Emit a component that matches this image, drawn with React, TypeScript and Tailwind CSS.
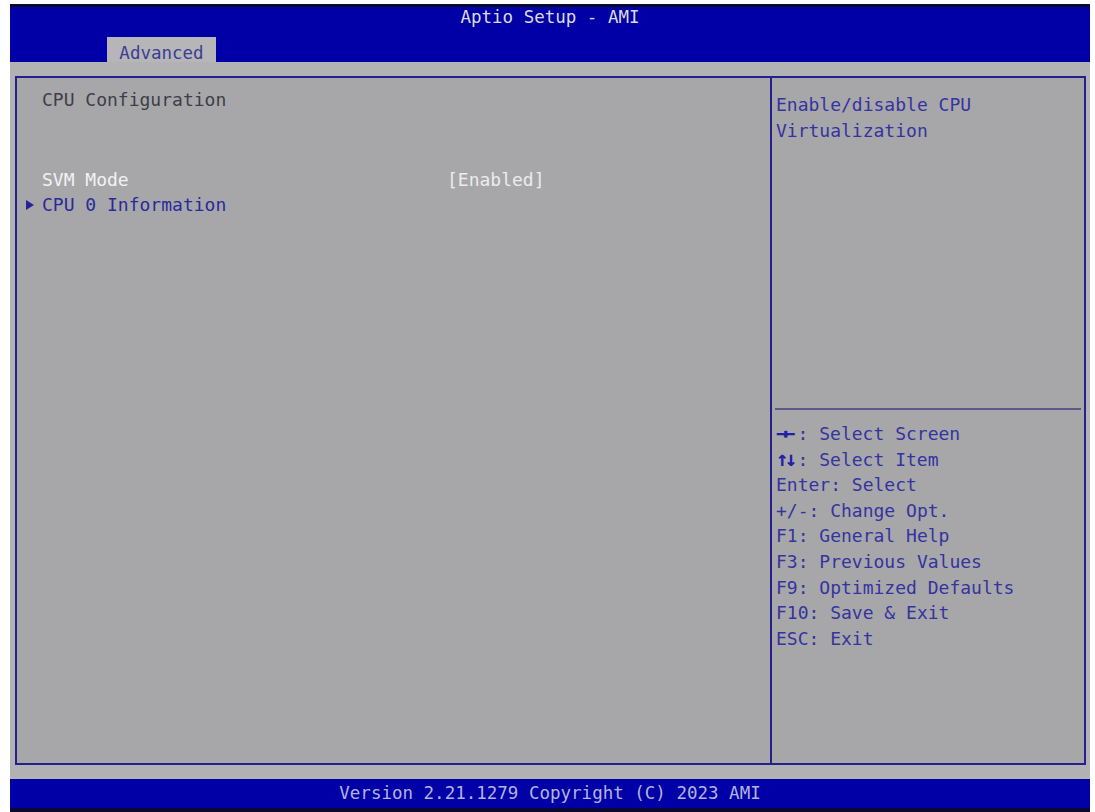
import React from "react";

const mono = { fontFamily: '"DejaVu Sans Mono", "Liberation Mono", monospace' };

function Arrow() {
  return (
    <svg width="8" height="10" viewBox="0 0 8 10" className="absolute left-[5px] top-[8px]">
      <polygon points="0,0 8,5 0,10" fill="#24249a" />
    </svg>
  );
}

function Help({ k, text }: { k: React.ReactNode; text: string }) {
  return (
    <div className="h-[25.6px] leading-[25.6px] whitespace-pre">
      {k}
      {text}
    </div>
  );
}

export default function App() {
  return (
    <div
      className="w-[1095px] h-[812px] bg-white pl-[10px] pr-[5px] pt-[4px] flex flex-col text-[18px] overflow-hidden"
      style={mono}
    >
      <div className="flex flex-col w-[1080px] h-[808px]">
        {/* header */}
        <div className="h-[3px] bg-[#0a0a30]" />
        <div className="h-[55px] bg-[#0000a6] relative flex flex-col">
          <div className="h-[20px] leading-[20px] text-center text-[#dcdcdc] text-[17.5px]">
            Aptio Setup - AMI
          </div>
          <div className="flex-1" />
          <div className="flex pl-[97px]">
            <div className="w-[109px] h-[25px] bg-[#b6b6b8] text-[#3c3c94] text-[17.5px] leading-[25px] text-center pt-[4px]">
              Advanced
            </div>
          </div>
        </div>
        {/* body */}
        <div className="flex-1 bg-[#b2b2b5] pt-[14px] pl-[5px] pr-[4px] pb-[14px] flex">
          <div className="flex-1 border-2 border-[#22228a] bg-[#a7a7aa] flex">
            {/* left */}
            <div className="w-[755px] border-r-2 border-[#22228a] pl-[25px] pt-[9px] relative">
              <div className="h-[25.6px] leading-[25.6px] text-[#3e3e48]">CPU Configuration</div>
              <div className="h-[54px]" />
              <div className="h-[25.6px] leading-[25.6px] flex text-[#f2f2f2]">
                <div className="w-[405px]">SVM Mode</div>
                <div className="text-[#ececec]">[Enabled]</div>
              </div>
              <div className="h-[25.6px] leading-[25.6px] relative text-[#2a2a9c]">
                <div className="absolute left-[-21px] top-0 w-[12px] h-[25.6px]">
                  <Arrow />
                </div>
                CPU 0 Information
              </div>
            </div>
            {/* right */}
            <div className="flex-1 flex flex-col">
              <div className="h-[330px] pl-[4px] pt-[14px] text-[#3434a0]">
                <div className="h-[25.6px] leading-[25.6px]">Enable/disable CPU</div>
                <div className="h-[25.6px] leading-[25.6px]">Virtualization</div>
              </div>
              <div className="mx-[3px] h-[2px] bg-[#5a5a8a]" />
              <div className="pl-[4px] pt-[11px] text-[#3434a0]">
                <Help
                  k={
                    <span className="inline-block w-[21.6px] text-left font-bold text-[#2020a8] text-[21px] leading-[20px] tracking-[-6px]">
                      →←
                    </span>
                  }
                  text=": Select Screen"
                />
                <Help
                  k={
                    <span className="inline-block w-[21.6px] text-left font-bold text-[#2020a8] text-[21px] leading-[20px] tracking-[-4px]">
                      ↑↓
                    </span>
                  }
                  text=": Select Item"
                />
                <Help k={null} text="Enter: Select" />
                <Help k={null} text="+/-: Change Opt." />
                <Help k={null} text="F1: General Help" />
                <Help k={null} text="F3: Previous Values" />
                <Help k={null} text="F9: Optimized Defaults" />
                <Help k={null} text="F10: Save & Exit" />
                <Help k={null} text="ESC: Exit" />
              </div>
            </div>
          </div>
        </div>
        {/* footer */}
        <div className="h-[29px] bg-[#0000a6] text-center leading-[29px] text-[#b4b4e0] text-[17.5px]">
          Version 2.21.1279 Copyright (C) 2023 AMI
        </div>
        <div className="h-[4px] bg-[#0a0a30]" />
      </div>
    </div>
  );
}
